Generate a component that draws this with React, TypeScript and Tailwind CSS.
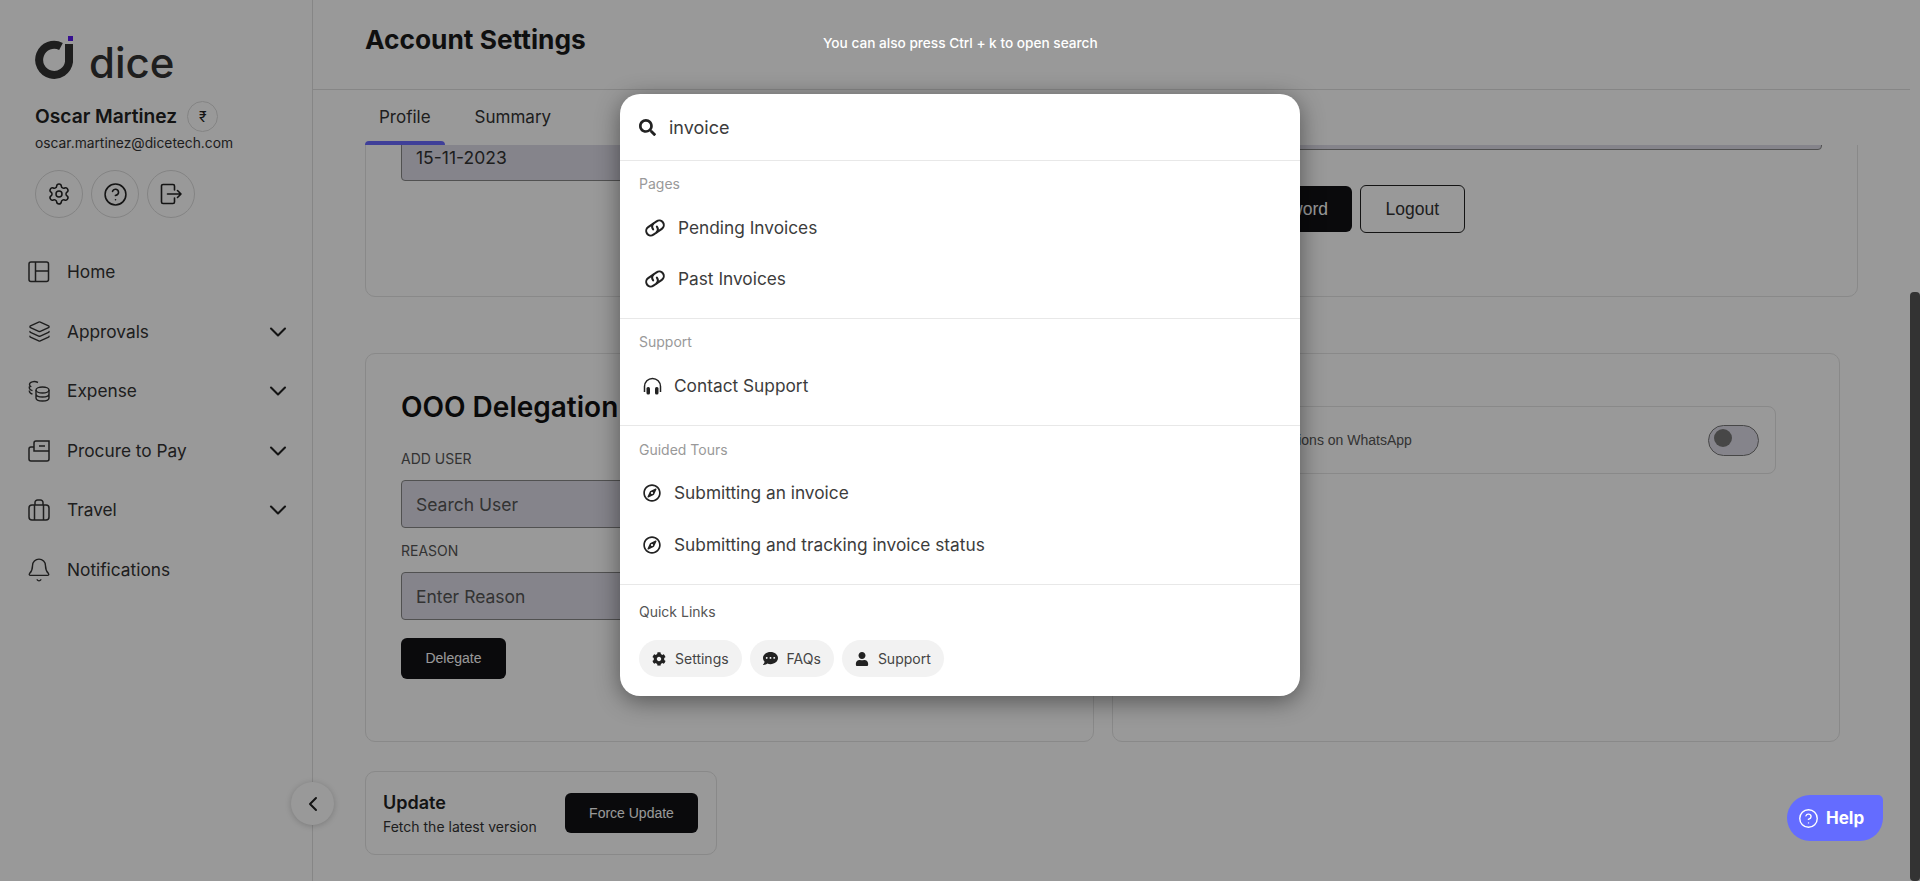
import {
  Bell,
  ChevronDown,
  ChevronLeft,
  CircleHelp,
  Layers,
  Settings,
} from "lucide-react";
import { FaCog, FaCommentDots, FaRegCompass, FaSearch, FaUser } from "react-icons/fa";
import type { ReactNode } from "react";

const HomeIcon = () => (
  <svg width="22" height="22" viewBox="0 0 22 22" fill="none" stroke="#333" strokeWidth="1.5">
    <rect x="1" y="1" width="19.5" height="19.5" rx="2" />
    <path d="M7.5 1v19.5M7.5 10h13" />
  </svg>
);

const CoinsIcon = () => (
  <svg width="22" height="22" viewBox="0 0 22 22" fill="none" stroke="#333" strokeWidth="1.4">
    <ellipse cx="14.5" cy="10" rx="6.5" ry="3" />
    <path d="M8 10v8c0 1.7 2.9 3 6.5 3s6.5-1.300 6.500-3v-8M8 14c0 1.700 2.900 3 6.500 3s6.500-1.300 6.500-3" />
    <path d="M10 2.500C6 .5 1.500 2 1.500 4.500c0 1 .7 1.800 1.800 2.400M1.500 6.500C.8 8.500 2 10 4.500 10.700M1.500 10.500c-.5 1.800.8 3 3 3.700" />
  </svg>
);

const FolderIcon = () => (
  <svg width="22" height="22" viewBox="0 0 22 22" fill="none" stroke="#333" strokeWidth="1.5">
    <path d="M1 9v10a2 2 0 0 0 2 2h16a2 2 0 0 0 2-2V9" />
    <path d="M1 9a2 2 0 0 1 2-2h3v4h15M6 7V3a2 2 0 0 1 2-2h13v8" />
    <path d="M11 6h6" />
  </svg>
);

const CaseIcon = () => (
  <svg width="22" height="22" viewBox="0 0 22 22" fill="none" stroke="#333" strokeWidth="1.5">
    <rect x="1" y="6" width="20" height="15" rx="3" />
    <path d="M6.500 6v15M15.500 6v15M7 6V3.500A2.500 2.500 0 0 1 9.500 1h3A2.500 2.500 0 0 1 15 3.500V6" />
  </svg>
);

const ExitIcon = () => (
  <svg width="22" height="22" viewBox="0 0 22 22" fill="none" stroke="#222" strokeWidth="1.6" strokeLinecap="round" strokeLinejoin="round">
    <path d="M13 1.500H3a1.500 1.500 0 0 0-1.500 1.500v16A1.500 1.500 0 0 0 3 20.500h10a1.500 1.500 0 0 0 1.500-1.500v-4M14.500 7V3A1.500 1.500 0 0 0 13 1.500" />
    <path d="M7.500 11h13.500M17.500 7.500 21 11l-3.500 3.500" />
  </svg>
);

const Logo = () => (
  <svg width="38" height="46" viewBox="0 0 38 46" fill="none">
    <path d="M26 10.500A15 15 0 1 0 34 26V8" stroke="#333" strokeWidth="8" />
    <rect x="33" y="0" width="5" height="5" fill="#5a1bf0" />
  </svg>
);

const ChainIcon = () => (
  <svg width="24" height="20" viewBox="0 0 21 17" fill="none" stroke="#222" strokeWidth="1.8" strokeLinecap="round">
    <g transform="rotate(-35 10.5 8.5)">
      <path d="M11.500 4.500H6a4 4 0 0 0 0 8h3a4 4 0 0 0 3.500-4" />
      <path d="M9.500 12.500H15a4 4 0 0 0 0-8h-3A4 4 0 0 0 8.500 8.500" />
    </g>
  </svg>
);

const HeadsetIcon = () => (
  <svg width="19" height="18" viewBox="0 0 19 18" fill="none">
    <path d="M1.500 15V9.500a8 8 0 0 1 16 0V15" stroke="#222" strokeWidth="1.500" />
    <rect x="3.500" y="10" width="3.500" height="7.500" rx="1.500" fill="#222" />
    <rect x="12" y="10" width="3.500" height="7.500" rx="1.500" fill="#222" />
  </svg>
);

const navItems: { label: string; icon: ReactNode; arrow?: boolean }[] = [
  { label: "Home", icon: <HomeIcon /> },
  { label: "Approvals", icon: <Layers size={23} strokeWidth={1.4} color="#333" />, arrow: true },
  { label: "Expense", icon: <CoinsIcon />, arrow: true },
  { label: "Procure to Pay", icon: <FolderIcon />, arrow: true },
  { label: "Travel", icon: <CaseIcon />, arrow: true },
  { label: "Notifications", icon: <Bell size={26} strokeWidth={1.3} color="#333" className="-ml-[2px]" /> },
];

const Sidebar = () => (
  <aside className="w-[313px] shrink-0 border-r border-[#e0e0e0] pt-[36px]">
    <div className="pl-[35px]">
      <div className="flex items-end gap-[16px] h-[46px]">
        <Logo />
        <span className="text-[42px] leading-[46px] font-medium text-[#333] -mb-[4px]">dice</span>
      </div>
      <div className="flex items-center gap-[10px] mt-[19px]">
        <span className="text-[19.200px] font-semibold text-[#222]">Oscar Martinez</span>
        <span className="size-[31px] rounded-full border border-[#dcdcdc] flex items-center justify-center text-[14px] text-[#222]">
          ₹
        </span>
      </div>
      <p className="text-[13.800px] leading-[20px] text-[#333] mt-[1px]">oscar.martinez@dicetech.com</p>
      <div className="flex gap-[8px] mt-[17px]">
        <span className="size-[48px] rounded-full border border-[#dcdcdc] flex items-center justify-center">
          <Settings size={24} strokeWidth={1.500} color="#222" />
        </span>
        <span className="size-[48px] rounded-full border border-[#dcdcdc] flex items-center justify-center">
          <CircleHelp size={25} strokeWidth={1.500} color="#222" />
        </span>
        <span className="size-[48px] rounded-full border border-[#dcdcdc] flex items-center justify-center">
          <ExitIcon />
        </span>
      </div>
    </div>
    <nav className="mt-[24.500px] pl-[28px] pr-[20px]">
      {navItems.map((item) => (
        <div key={item.label} className="h-[59.500px] flex items-center text-[17.300px] text-[#333]">
          <span className="w-[39px] flex">{item.icon}</span>
          <span className="grow">{item.label}</span>
          {item.arrow && <ChevronDown size={28} strokeWidth={1.800} color="#222" />}
        </div>
      ))}
    </nav>
  </aside>
);

const Field = ({ placeholder, value }: { placeholder?: string; value?: string }) => (
  <input
    readOnly
    placeholder={placeholder}
    value={value}
    className="w-full h-[48px] rounded-[4px] border border-[#888] bg-[#dedde8] px-[14px] text-[17.500px] text-[#333] placeholder:text-[#555] outline-none"
  />
);

const Content = () => (
  <div className="flex-1 overflow-hidden pl-[52px]">
    <div className="w-[1493px] h-[252px] -mt-[100px] rounded-[10px] border border-[#e4e4e4] pt-[56px] pl-[35px] pr-[35px] grid grid-cols-[656px_1fr] gap-x-[104px]">
      <div className="pt-[31px]">
        <Field value="15-11-2023" />
      </div>
      <div>
        <Field />
        <div className="flex items-center gap-[8px] mt-[35px] font-['Liberation_Sans',sans-serif] text-[17.500px]">
          <button className="h-[46px] px-[24px] rounded-[6px] bg-[#111114] text-white">Change Password</button>
          <button className="h-[48px] px-[24.500px] rounded-[6px] border border-[#222] text-[#333]">Logout</button>
        </div>
      </div>
    </div>

    <div className="w-[1475px] grid grid-cols-2 gap-[18px] mt-[56px]">
      <div className="h-[389px] rounded-[10px] border border-[#e4e4e4] pt-[36px] px-[35px]">
        <h2 className="text-[28px] leading-[34px] font-semibold text-[#111]">OOO Delegation</h2>
        <p className="text-[14px] leading-[20px] text-[#555] mt-[25px]">ADD USER</p>
        <div className="mt-[11px]">
          <Field placeholder="Search User" />
        </div>
        <p className="text-[14px] leading-[20px] text-[#555] mt-[13px]">REASON</p>
        <div className="mt-[11px]">
          <Field placeholder="Enter Reason" />
        </div>
        <button className="h-[41px] w-[105px] mt-[18px] rounded-[6px] bg-[#111114] text-white text-[14px] font-['Liberation_Sans',sans-serif]">
          Delegate
        </button>
      </div>
      <div className="h-[389px] rounded-[10px] border border-[#e4e4e4] pt-[52px] pl-[36px] pr-[63px]">
        <div className="h-[68px] rounded-[8px] border border-[#e4e4e4] flex items-center justify-between pl-[46px] pr-[16px] font-['Liberation_Sans',sans-serif] text-[14px] text-[#555]">
          <span>Receive notifications on WhatsApp</span>
          <span className="w-[51px] h-[31px] rounded-full border border-[#777] bg-[#dedde8] flex pl-[5px] pt-[3px]">
            <span className="size-[18px] rounded-full bg-[#777]" />
          </span>
        </div>
      </div>
    </div>

    <div className="w-[352px] h-[84px] mt-[29px] rounded-[10px] border border-[#e4e4e4] flex items-center justify-between pl-[17px] pr-[18px]">
      <div className="pt-[2px]">
        <p className="text-[18px] leading-[24px] font-semibold text-[#222]">Update</p>
        <p className="text-[14px] leading-[20px] text-[#333] mt-[2px]">Fetch the latest version</p>
      </div>
      <button className="h-[40px] w-[133px] rounded-[6px] bg-[#111114] text-white text-[14px] font-['Liberation_Sans',sans-serif]">
        Force Update
      </button>
    </div>
  </div>
);

const Row = ({ icon, label, gap, h }: { icon: ReactNode; label: string; gap: string; h: string }) => (
  <div className={`flex items-center text-[17.300px] text-[#3c3c3c] ${h}`}>
    <span className={`flex ${gap}`}>{icon}</span>
    {label}
  </div>
);

const Chip = ({ icon, label }: { icon: ReactNode; label: string }) => (
  <span className="h-[37px] px-[13px] rounded-full bg-[#f2f2f2] flex items-center gap-[9px] text-[14px] text-[#444]">
    {icon}
    {label}
  </span>
);

const Label = ({ children }: { children: ReactNode }) => (
  <p className="text-[14px] leading-[20px] text-[#999]">{children}</p>
);

const SearchModal = () => (
  <div className="absolute left-[620px] top-[94px] w-[680px] h-[602px] rounded-[20px] bg-white shadow-[0_5px_25px_rgba(0,0,0,0.45)] overflow-hidden">
    <div className="h-[67px] flex items-center gap-[13px] pl-[19px] border-b border-[#e8e8e8]">
      <FaSearch size={17} color="#222" />
      <input readOnly value="invoice" className="flex-1 outline-none text-[18px] text-[#3c3c3c]" />
    </div>
    <div className="h-[158px] pt-[13px] pl-[19px] border-b border-[#e8e8e8]">
      <Label>Pages</Label>
      <div className="mt-[8px] pl-[4px]">
        <Row h="h-[51px]" gap="w-[35px]" icon={<ChainIcon />} label="Pending Invoices" />
        <Row h="h-[51px]" gap="w-[35px]" icon={<ChainIcon />} label="Past Invoices" />
      </div>
    </div>
    <div className="h-[107px] pt-[13px] pl-[19px] border-b border-[#e8e8e8]">
      <Label>Support</Label>
      <div className="mt-[8px] pl-[4px]">
        <Row h="h-[51px]" gap="w-[31px]" icon={<HeadsetIcon />} label="Contact Support" />
      </div>
    </div>
    <div className="h-[159px] pt-[14px] pl-[19px] border-b border-[#e8e8e8]">
      <Label>Guided Tours</Label>
      <div className="mt-[6px] pl-[4px]">
        <Row h="h-[53px]" gap="w-[31px]" icon={<FaRegCompass size={18} color="#222" />} label="Submitting an invoice" />
        <Row h="h-[52px]" gap="w-[31px]" icon={<FaRegCompass size={18} color="#222" />} label="Submitting and tracking invoice status" />
      </div>
    </div>
    <div className="pt-[17px] pl-[19px]">
      <p className="text-[14px] leading-[20px] text-[#555]">Quick Links</p>
      <div className="flex gap-[8px] mt-[18px]">
        <Chip icon={<FaCog size={14} color="#222" />} label="Settings" />
        <Chip icon={<FaCommentDots size={15} color="#222" />} label="FAQs" />
        <Chip icon={<FaUser size={14} color="#222" />} label="Support" />
      </div>
    </div>
  </div>
);

export default function App() {
  return (
    <div className="relative w-full h-[881px] overflow-hidden bg-white font-['Inter',sans-serif]">
      <div className="flex h-full">
        <Sidebar />
        <main className="flex-1 flex flex-col min-w-0">
          <header className="h-[90px] shrink-0 border-b border-[#e0e0e0] pl-[52px] pt-[24px]">
            <h1 className="text-[26.300px] leading-[32px] font-bold text-[#1a1a1a]">Account Settings</h1>
          </header>
          <div className="h-[55px] shrink-0 flex gap-[16px] pl-[52px] text-[17px] text-[#333]">
            <div className="flex flex-col">
              <span className="flex-1 flex items-center px-[14px] pt-[4px]">Profile</span>
              <span className="h-[4px] rounded-t-[4px] bg-[#6a6aff]" />
            </div>
            <div className="flex items-center px-[14px]">Summary</div>
          </div>
          <Content />
        </main>
        <div className="w-[10px] shrink-0 pt-[292px]">
          <div className="h-full rounded-[4px] bg-[#555]" />
        </div>
      </div>

      <button className="absolute left-[291px] top-[782px] size-[43px] rounded-full bg-white shadow-[0_1px_6px_rgba(0,0,0,0.2)] flex items-center justify-center">
        <ChevronLeft size={24} strokeWidth={2} color="#222" />
      </button>

      {/* dimmed backdrop of the search dialog */}
      <div className="absolute inset-0 bg-black/40" />
      <p className="absolute left-[823px] top-[33px] text-[13.650px] leading-[20px] font-medium text-white">
        You can also press Ctrl + k to open search
      </p>
      <SearchModal />

      <button className="absolute left-[1787px] top-[795px] w-[96px] h-[46px] rounded-l-[23px] rounded-tr-[5px] rounded-br-[23px] bg-[#646cff] text-white flex items-center pl-[11px] gap-[7px]">
        <CircleHelp size={21} strokeWidth={1.6} />
        <span className="text-[17px] font-bold pt-[1px]">Help</span>
      </button>
    </div>
  );
}
